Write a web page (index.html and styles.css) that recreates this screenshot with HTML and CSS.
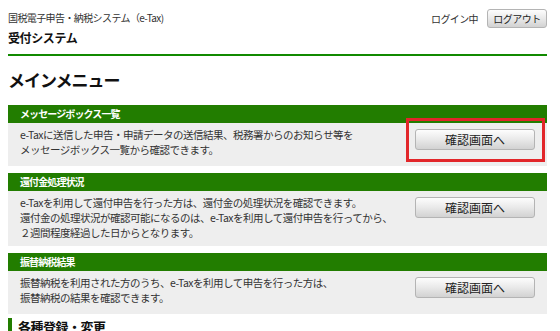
FILE: index.html
```html
<!DOCTYPE html>
<html lang="ja">
  <head>
    <meta charset="UTF-8" />
    <title>メインメニュー</title>
    <link rel="stylesheet" href="styles.css">
  </head>
  <body>
    <!-- ヘッダー -->
    <header class="site-header">
      <div class="site-title">
        <p class="site-name">国税電子申告・納税システム（e-Tax)</p>
        <p class="system-name">受付システム</p>
      </div>
      <div class="login-status">
        <span>ログイン中</span>
        <button class="btn btn-small" type="button">ログアウト</button>
      </div>
    </header>

    <h1 class="page-title">メインメニュー</h1>

    <!-- メニュー -->
    <div class="menu-list">
      <section class="menu-box">
        <h2 class="menu-head">メッセージボックス一覧</h2>
        <div class="menu-body">
          <p>e-Taxに送信した申告・申請データの送信結果、税務署からのお知らせ等を<br>メッセージボックス一覧から確認できます。</p>
          <span class="highlight"><button class="btn" type="button">確認画面へ</button></span>
        </div>
      </section>

      <section class="menu-box">
        <h2 class="menu-head">還付金処理状況</h2>
        <div class="menu-body">
          <p>e-Taxを利用して還付申告を行った方は、還付金の処理状況を確認できます。<br>還付金の処理状況が確認可能になるのは、e-Taxを利用して還付申告を行ってから、<br>２週間程度経過した日からとなります。</p>
          <button class="btn" type="button">確認画面へ</button>
        </div>
      </section>

      <section class="menu-box">
        <h2 class="menu-head">振替納税結果</h2>
        <div class="menu-body">
          <p>振替納税を利用された方のうち、e-Taxを利用して申告を行った方は、<br>振替納税の結果を確認できます。</p>
          <button class="btn" type="button">確認画面へ</button>
        </div>
      </section>
    </div>

    <h2 class="sub-title">各種登録・変更</h2>
  </body>
</html>
```

FILE: styles.css
```css
/* ======= 変数 ======= */
:root {
  --font-family: "Noto Sans CJK JP", "Liberation Sans", sans-serif;
  --color-green: #227d00;
  --color-line: #118a00;
  --color-body-bg: #eeeeee;
  --color-text: #333;
  --color-red: #e2262a;
}

/* ======= 全体 ======= */
* {
  box-sizing: border-box;
  margin: 0;
  padding: 0;
}

body {
  font-family: var(--font-family);
  font-size: 11px;
  color: var(--color-text);
  background: #fff;
  margin: 0 0 0 8px;
  width: 539px;
}

/* ======= ヘッダー ======= */
.site-header {
  display: flex;
  justify-content: space-between;
  align-items: flex-start;
  padding-top: 9px;
  height: 56px;
  border-bottom: 2px solid var(--color-line);
}

.site-name {
  font-size: 10px;
  letter-spacing: -0.6px;
  line-height: 18px;
}

.system-name {
  font-size: 12px;
  font-weight: bold;
  color: #111;
  letter-spacing: -0.4px;
  line-height: 18px;
  margin-top: 2px;
}

.login-status {
  display: flex;
  align-items: center;
  gap: 9px;
  font-size: 10px;
  letter-spacing: -0.6px;
}

/* ======= ボタン ======= */
.btn {
  font-family: var(--font-family);
  font-size: 12px;
  color: #222;
  width: 120px;
  height: 21px;
  line-height: 19px;
  border: 1px solid #b4b4b4;
  border-radius: 3px;
  background: linear-gradient(#fdfdfd, #e9e9e9 50%, #d2d2d2);
  cursor: pointer;
  flex-shrink: 0;
}

.btn-small {
  width: 60px;
  height: 19px;
  line-height: 17px;
  font-size: 10px;
  letter-spacing: -0.5px;
}

/* ======= 見出し ======= */
.page-title {
  font-size: 17px;
  font-weight: bold;
  color: #111;
  letter-spacing: -1px;
  line-height: 24px;
  margin: 12px 0 13px;
}

/* ======= メニュー ======= */
.menu-list {
  display: flex;
  flex-direction: column;
  gap: 7px;
}

.menu-head {
  background: var(--color-green);
  color: #fff;
  font-size: 10px;
  font-weight: bold;
  letter-spacing: -0.9px;
  line-height: 18px;
  padding: 0 12px;
}

.menu-body {
  display: flex;
  justify-content: space-between;
  align-items: flex-start;
  background: var(--color-body-bg);
  padding: 4px 12px 6px;
  min-height: 43px;
}

.menu-body p {
  font-size: 10.5px;
  letter-spacing: -0.5px;
  line-height: 15px;
  white-space: nowrap;
}

.menu-body .btn {
  margin-top: 2px;
}

/* 強調枠 */
.highlight {
  position: relative;
  display: block;
  flex-shrink: 0;
}

.highlight::after {
  content: "";
  position: absolute;
  top: -9px;
  left: -9px;
  right: -10px;
  bottom: -12px;
  border: 3px solid var(--color-red);
}

.sub-title {
  font-size: 13px;
  font-weight: bold;
  color: #111;
  letter-spacing: -0.5px;
  line-height: 18px;
  margin-top: 4px;
  padding-left: 6px;
  border-left: 4px solid var(--color-green);
}
```
